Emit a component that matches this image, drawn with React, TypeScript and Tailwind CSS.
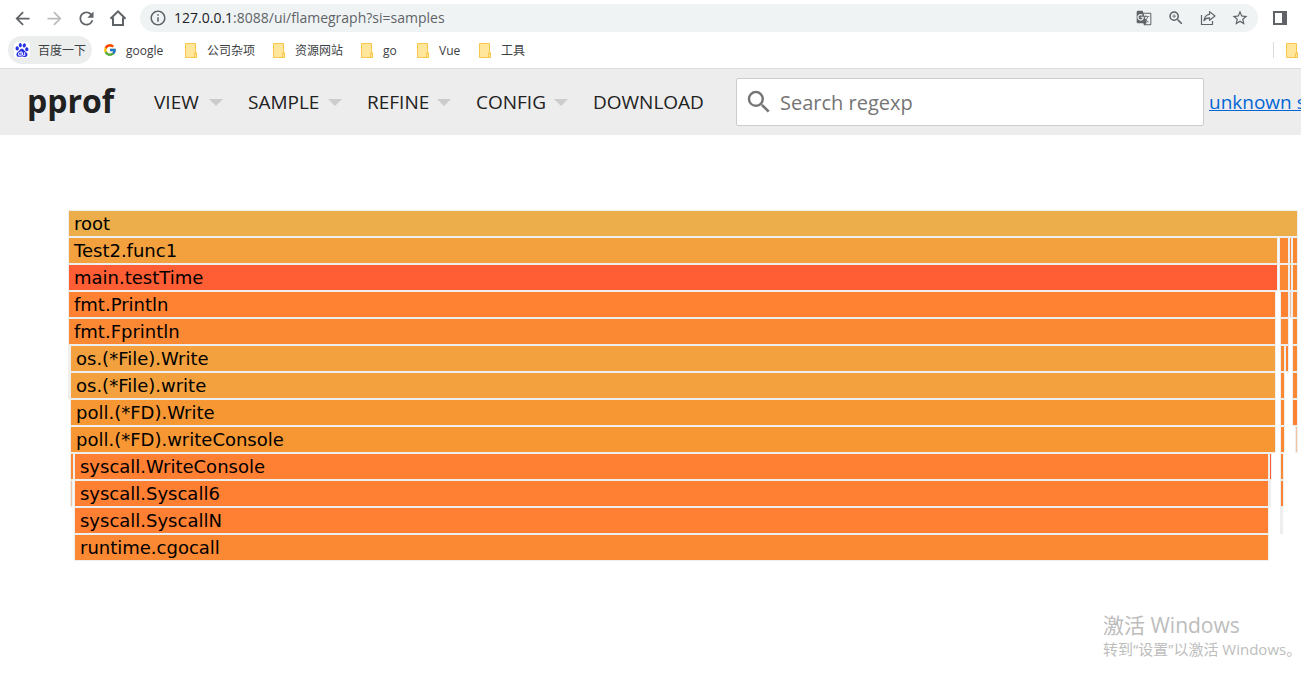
import { useState } from 'react';
import type { ReactNode } from 'react';
import {
  MdArrowBack,
  MdArrowForward,
  MdGTranslate,
  MdInfoOutline,
  MdRefresh,
  MdSearch,
  MdStarBorder,
  MdZoomIn,
} from 'react-icons/md';
import { SiBaidu } from 'react-icons/si';
import { FcGoogle } from 'react-icons/fc';

type Frame = { from: number; to: number; color: string; name?: string };

const TOTAL = 1230;
const GOLD = '#ecae4a';
const AMBER = '#f2a13e';
const RED = '#ff5d33';
const ORANGE = '#ff8233';
const TANGERINE = '#fb8832';
const HONEY = '#f69733';
const CORAL = '#ff7f33';
const PALE = '#f3c3a0';
const GREY = '#eeeeee';

const ROWS: Frame[][] = [
  [{ from: 0, to: 1230, color: GOLD, name: 'root' }],
  [
    { from: 0, to: 1210, color: AMBER, name: 'Test2.func1' },
    { from: 1211, to: 1221, color: TANGERINE },
    { from: 1221, to: 1224, color: TANGERINE },
    { from: 1224, to: 1230, color: TANGERINE },
  ],
  [
    { from: 0, to: 1210, color: RED, name: 'main.testTime' },
    { from: 1211, to: 1221, color: TANGERINE },
    { from: 1221, to: 1224, color: TANGERINE },
    { from: 1224, to: 1230, color: TANGERINE },
  ],
  [
    { from: 0, to: 1208, color: ORANGE, name: 'fmt.Println' },
    { from: 1212, to: 1221, color: ORANGE },
    { from: 1221, to: 1224, color: PALE },
    { from: 1224, to: 1230, color: TANGERINE },
  ],
  [
    { from: 0, to: 1208, color: TANGERINE, name: 'fmt.Fprintln' },
    { from: 1212, to: 1221, color: TANGERINE },
    { from: 1224, to: 1230, color: TANGERINE },
  ],
  [
    { from: 0, to: 2, color: GREY },
    { from: 2, to: 1208, color: AMBER, name: 'os.(*File).Write' },
    { from: 1212, to: 1217, color: TANGERINE },
    { from: 1217, to: 1221, color: ORANGE },
    { from: 1224, to: 1230, color: TANGERINE },
  ],
  [
    { from: 0, to: 2, color: GREY },
    { from: 2, to: 1208, color: AMBER, name: 'os.(*File).write' },
    { from: 1212, to: 1217, color: TANGERINE },
    { from: 1224, to: 1230, color: TANGERINE },
  ],
  [
    { from: 2, to: 1208, color: HONEY, name: 'poll.(*FD).Write' },
    { from: 1212, to: 1217, color: TANGERINE },
    { from: 1224, to: 1230, color: ORANGE },
  ],
  [
    { from: 2, to: 1208, color: HONEY, name: 'poll.(*FD).writeConsole' },
    { from: 1212, to: 1217, color: TANGERINE },
    { from: 1227, to: 1230, color: PALE },
  ],
  [
    { from: 2, to: 6, color: TANGERINE },
    { from: 6, to: 1201, color: CORAL, name: 'syscall.WriteConsole' },
    { from: 1201, to: 1204, color: RED },
    { from: 1212, to: 1216, color: TANGERINE },
  ],
  [
    { from: 2, to: 5, color: PALE },
    { from: 6, to: 1201, color: CORAL, name: 'syscall.Syscall6' },
    { from: 1201, to: 1203, color: GREY },
    { from: 1212, to: 1216, color: ORANGE },
  ],
  [
    { from: 6, to: 1201, color: CORAL, name: 'syscall.SyscallN' },
    { from: 1212, to: 1215, color: GREY },
  ],
  [{ from: 6, to: 1201, color: TANGERINE, name: 'runtime.cgocall' }],
];

const pct = (n: number) => `${(n / TOTAL) * 100}%`;

function FlameRow({ frames }: { frames: Frame[] }) {
  return (
    <div className="flex h-[27px]">
      {frames.map((f, i) => (
        <div
          key={f.from}
          className={`box-border min-w-0 shrink-0 truncate border border-[#eee] leading-[25px] ${f.name ? 'pl-[5px]' : ''}`}
          style={{
            marginLeft: pct(f.from - (i > 0 ? frames[i - 1].to : 0)),
            width: pct(f.to - f.from),
            backgroundColor: f.color,
          }}
        >
          {f.name}
        </div>
      ))}
    </div>
  );
}

function FolderIcon() {
  return (
    <svg width="13" height="15" viewBox="0 0 13 15" className="shrink-0" aria-hidden="true">
      <path d="M.5.5h10v9h1v5H.5z" fill="#ffe69a" stroke="#f7c64b" />
      <path d="M9.500 14.500v-4h2v4z" fill="#ffe69a" stroke="#f7c64b" />
    </svg>
  );
}

function HomeIcon() {
  return (
    <svg width="18" height="18" viewBox="0 0 18 18" fill="none" stroke="currentColor" strokeWidth="2" aria-hidden="true">
      <path d="M1.500 9.700 9 2.400l7.500 7.300M4 8.500V16h3.500M14 8.500V16h-3.500M4 16h10" />
    </svg>
  );
}

function ShareIcon() {
  return (
    <svg width="16" height="16" viewBox="0 0 16 16" fill="none" stroke="currentColor" strokeWidth="1.200" aria-hidden="true">
      <path d="M1.500 5v9.500h11V11" />
      <path d="M9.500 1.600 15 6l-5.500 4.300V7.800C7 7.700 5.200 8.700 4 10.800 4.300 7.200 6 4.800 9.500 4.300z" strokeLinejoin="round" />
    </svg>
  );
}

function SidePanelIcon() {
  return (
    <svg width="14" height="14" viewBox="0 0 14 14" aria-hidden="true">
      <path d="M0 0h14v14H0zM2 2v10h7V2z" fill="currentColor" fillRule="evenodd" />
    </svg>
  );
}

function IconButton({ label, children, className = '' }: { label: string; children: ReactNode; className?: string }) {
  return (
    <button type="button" aria-label={label} className={`flex w-8 shrink-0 items-center justify-center ${className}`}>
      {children}
    </button>
  );
}

function Bookmark({ label, className, icon }: { label: string; className: string; icon?: ReactNode }) {
  return (
    <a href="#" className={`flex h-7 shrink-0 items-center whitespace-nowrap ${className}`}>
      {icon ?? <FolderIcon />}
      <span className="pt-[2px]">{label}</span>
    </a>
  );
}

function MenuItem({ label, className }: { label: string; className: string }) {
  return (
    <button type="button" className={`flex shrink-0 items-center justify-between pr-[25px] ${className}`}>
      {label}
      <span className="border-x-[7px] border-t-[7px] border-x-transparent border-t-[#ccc]" />
    </button>
  );
}

export default function App() {
  const [url, setUrl] = useState('/ui/flamegraph?si=samples');
  const [query, setQuery] = useState('');

  return (
    <div className="relative min-h-screen overflow-hidden bg-white font-['Open_Sans','Noto_Sans_CJK_SC',sans-serif] text-[#212121]">
      <div className="flex h-9 items-center pr-[5px] pl-[6px] text-[#5f6368]">
        <IconButton label="Back"><MdArrowBack size={21} /></IconButton>
        <IconButton label="Forward" className="text-[#babcbe]"><MdArrowForward size={21} /></IconButton>
        <IconButton label="Reload"><MdRefresh size={21} /></IconButton>
        <IconButton label="Home"><HomeIcon /></IconButton>
        <div className="ml-[6px] flex h-7 flex-1 items-center rounded-full bg-[#eff3f4] pr-[2px] pl-[9px] text-sm">
          <MdInfoOutline size={18} className="mr-[7px] shrink-0" />
          <span className="text-[#202124]">127.0.0.1</span>
          <span>:8088</span>
          <input
            aria-label="Address"
            value={url}
            onChange={(e) => setUrl(e.target.value)}
            className="min-w-0 flex-1 bg-transparent outline-none"
          />
          <IconButton label="Translate"><MdGTranslate size={16} /></IconButton>
          <IconButton label="Zoom"><MdZoomIn size={18} /></IconButton>
          <IconButton label="Share"><ShareIcon /></IconButton>
          <IconButton label="Bookmark this page"><MdStarBorder size={18} /></IconButton>
        </div>
        <IconButton label="Side panel" className="ml-[6px]"><SidePanelIcon /></IconButton>
      </div>

      <nav className="flex h-[33px] items-center border-b border-[#dadce0] pb-[4px] pl-2 text-xs text-[#3c4043]">
        <Bookmark
          label="百度一下"
          className="w-[84px] gap-2 rounded-full bg-[#eceeee] pl-[6px]"
          icon={
            <span className="flex size-4 items-center justify-center rounded-sm bg-white text-[#2932e1]">
              <SiBaidu size={14} />
            </span>
          }
        />
        <Bookmark label="google" className="ml-[11px] w-[82px] gap-[9px]" icon={<FcGoogle size={14} />} />
        <Bookmark label="公司杂项" className="w-[88px] gap-[9px]" />
        <Bookmark label="资源网站" className="w-[88px] gap-[9px]" />
        <Bookmark label="go" className="w-[56px] gap-[9px]" />
        <Bookmark label="Vue" className="w-[62px] gap-[9px]" />
        <Bookmark label="工具" className="gap-[9px]" />
        <div className="ml-auto flex h-4 items-center border-l border-[#dadce0] pr-[2px] pl-3">
          <FolderIcon />
        </div>
      </nav>

      <header className="flex h-[66px] items-center bg-[#ededed] pl-[27px] text-[19px]">
        <h1 className="w-[127px] shrink-0 pb-[3px] text-[32px] leading-none font-bold">pprof</h1>
        <MenuItem label="VIEW" className="w-[94px]" />
        <MenuItem label="SAMPLE" className="w-[119px]" />
        <MenuItem label="REFINE" className="w-[109px]" />
        <MenuItem label="CONFIG" className="w-[117px]" />
        <button type="button" className="w-[143px] shrink-0 text-left">DOWNLOAD</button>
        <label className="flex h-12 min-w-0 flex-1 items-center rounded-xs border border-[#ccc] bg-white pl-[7px]">
          <MdSearch size={30} className="mr-[6px] shrink-0 text-[#757575]" />
          <input
            aria-label="Search regexp"
            placeholder="Search regexp"
            value={query}
            onChange={(e) => setQuery(e.target.value)}
            className="min-w-0 flex-1 bg-transparent pt-[2px] text-xl outline-none placeholder:text-[#757575]"
          />
        </label>
        <div className="ml-[5px] w-[92px] shrink-0 overflow-hidden whitespace-nowrap">
          <a href="#" className="text-[#0366d6] underline">unknown samples</a>
        </div>
      </header>

      <main className="pt-[75px] pr-[3px] pl-[68px] font-['DejaVu_Sans',sans-serif] text-lg text-black">
        {ROWS.map((frames, i) => (
          <FlameRow key={i} frames={frames} />
        ))}
      </main>

      <aside className="absolute right-0 bottom-[15px] w-[198px] whitespace-nowrap text-[#bdbdbd]">
        <p className="text-[21px] leading-7">激活 Windows</p>
        <p className="text-[15px] leading-5">转到“设置”以激活 Windows。</p>
      </aside>
    </div>
  );
}
